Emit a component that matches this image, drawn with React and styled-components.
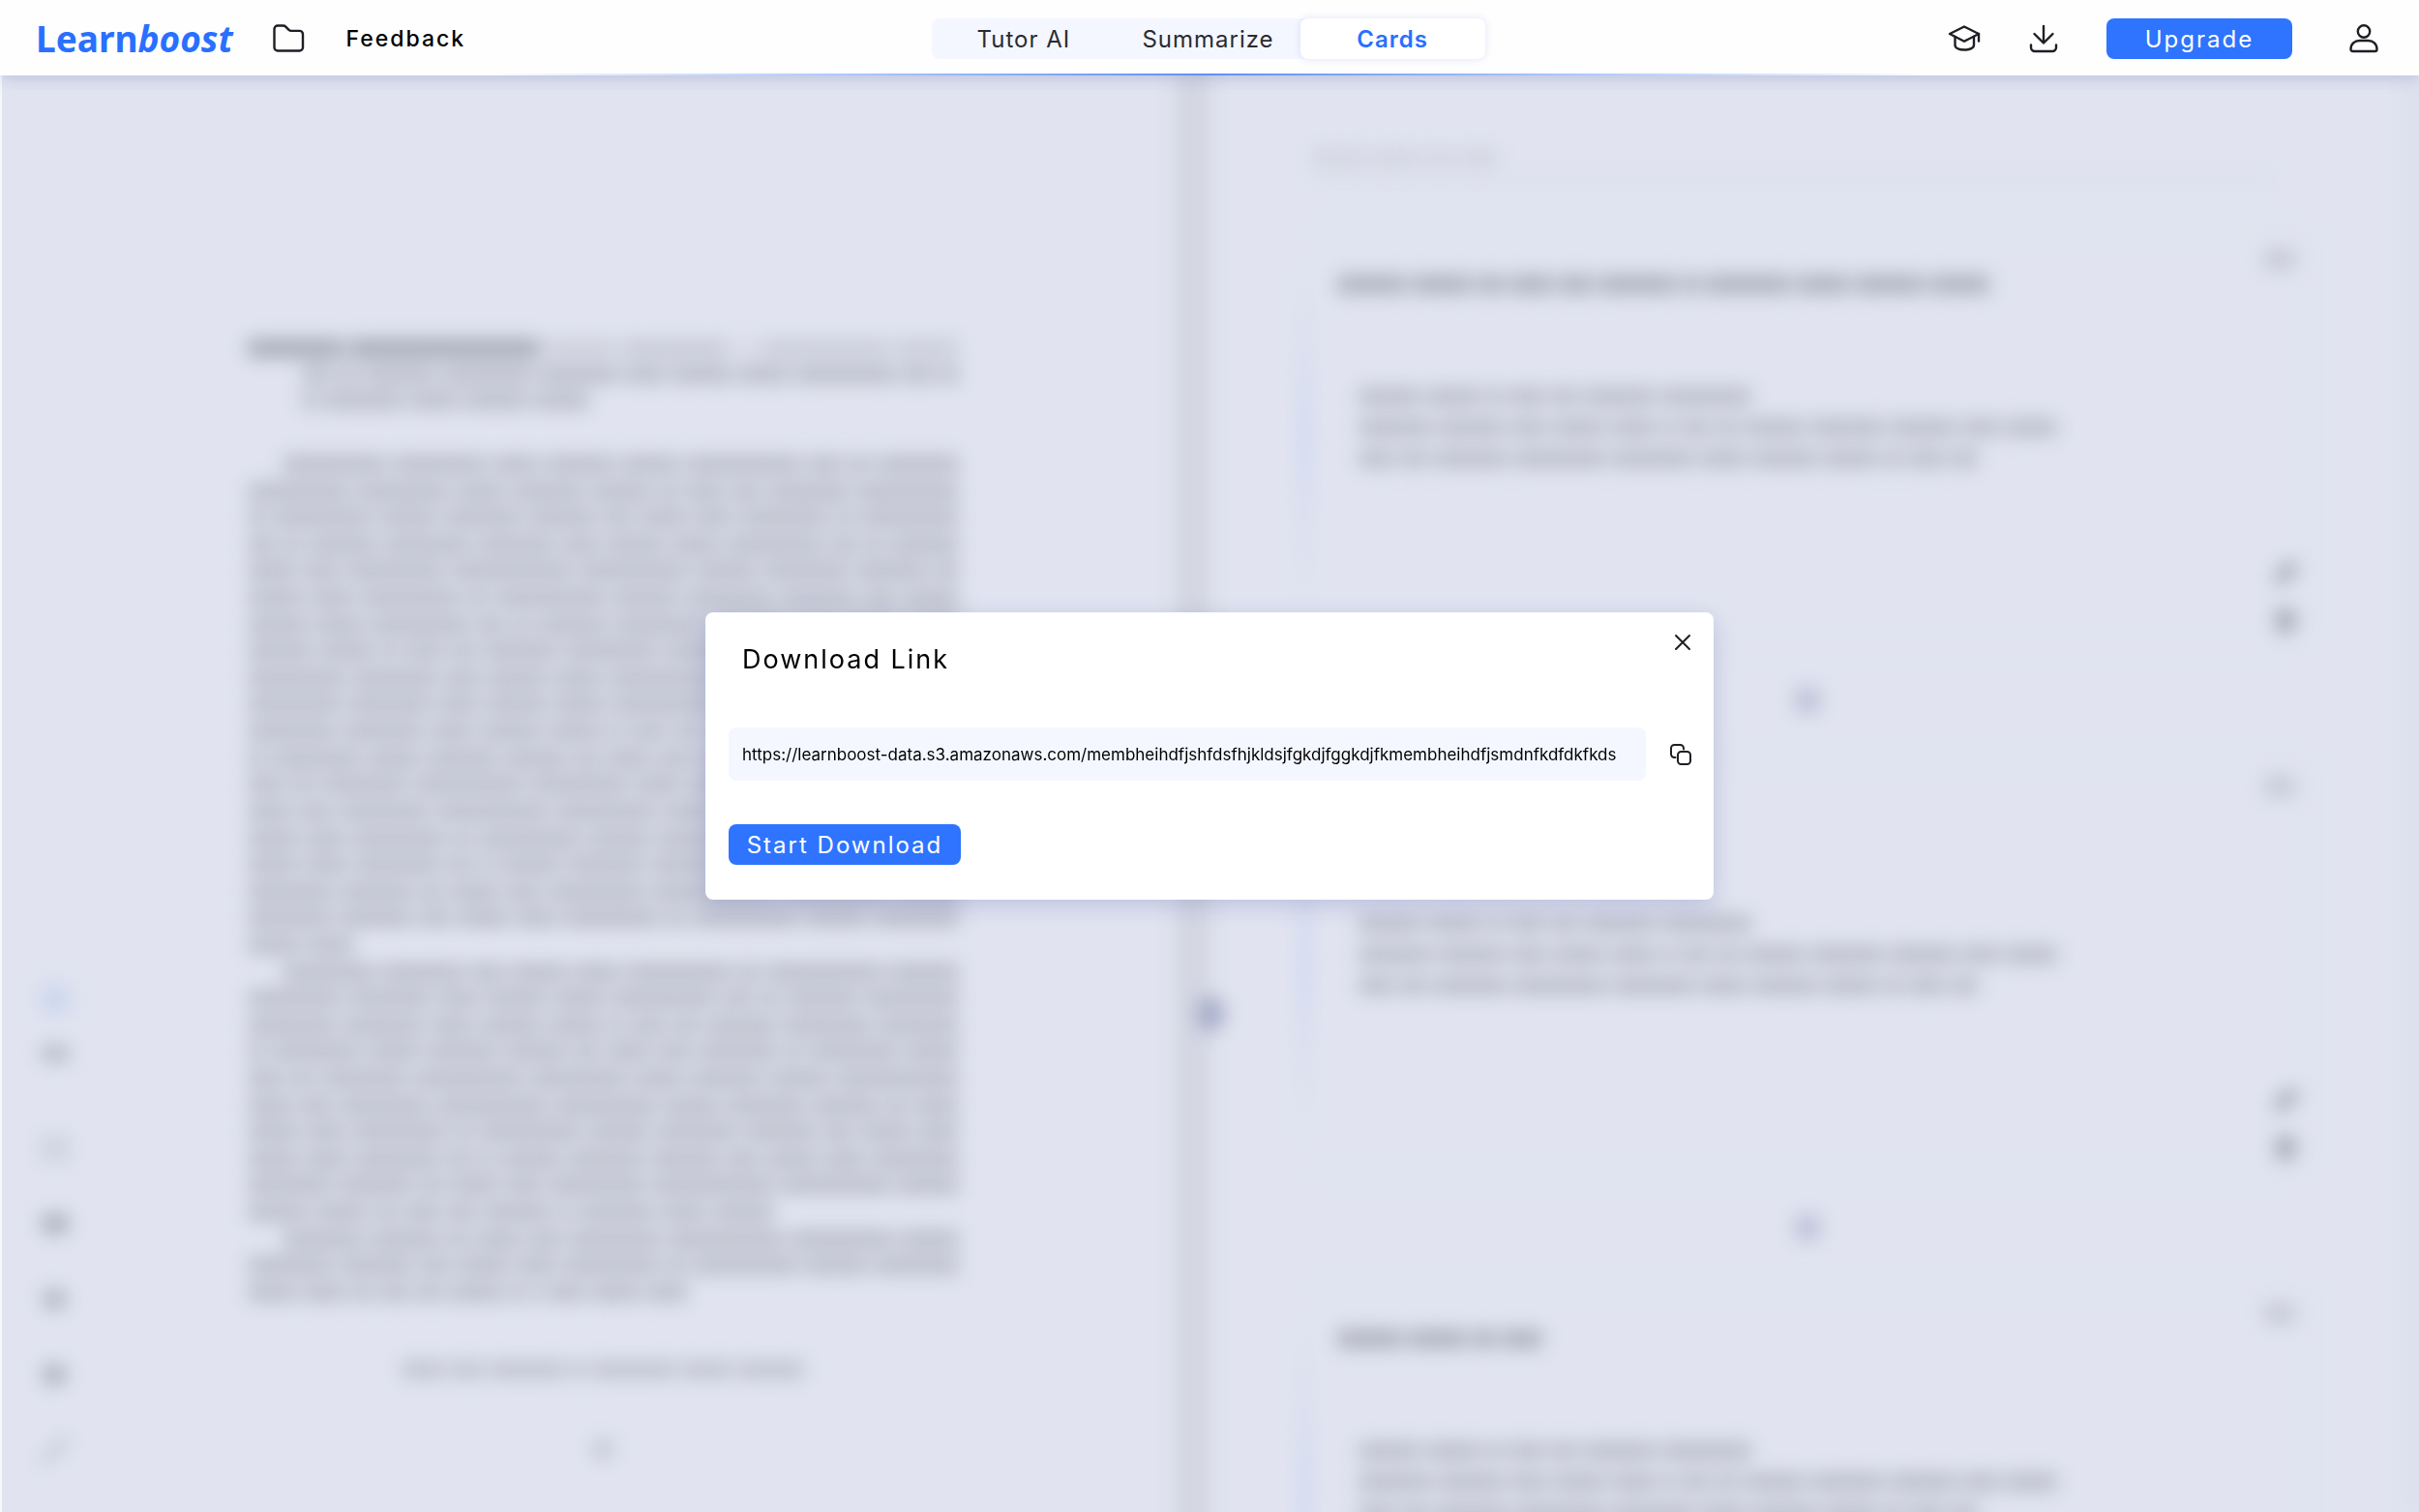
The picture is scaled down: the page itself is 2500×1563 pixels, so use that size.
import styled, { createGlobalStyle, css } from "styled-components";

const theme = {
  blue: "#2970FF",
  button: "#2E74FF",
  tint: "#F4F7FF",
  ink: "#000000",
  veil: "#E1E4F0",
  smudge: "#BABCC9",
};

const GlobalStyle = createGlobalStyle`
  * {
    box-sizing: border-box;
  }

  body {
    margin: 0;
    font-family: Inter, "Liberation Sans", sans-serif;
    color: ${theme.ink};
  }

  button, input {
    font-family: inherit;
  }
`

const Page = styled.div`
  display: flex;
  flex-direction: column;
  height: 100vh;
  min-height: 900px;
  overflow: hidden;
`

/* Header */

const Header = styled.header`
  position: relative;
  z-index: 1;
  display: grid;
  grid-template-columns: 1fr 572px 1fr;
  align-items: center;
  flex-shrink: 0;
  height: 78px;
  padding: 2px 40px 0 37px;
  background: #FEFEFF;
  box-shadow: 0 2px 16px rgba(80, 90, 170, 0.28);

  &::after {
    content: "";
    position: absolute;
    left: 20%;
    right: 20%;
    bottom: 0;
    height: 2px;
    background: linear-gradient(90deg, transparent, #5E90F5, transparent);
  }
`

const HeaderSide = styled.div`
  display: flex;
  align-items: center;
  justify-content: ${props => props.$end ? "flex-end" : "flex-start"};
`

const Logo = styled.a`
  margin-right: 40px;
  color: ${theme.blue};
  font-family: "Noto Sans", "Open Sans", sans-serif;
  font-size: 37px;
  line-height: 42px;
  font-weight: 700;
  text-decoration: none;

  em {
    font-style: italic;
  }
`

const IconButton = styled.button`
  display: flex;
  padding: 0;
  border: none;
  background: none;
  color: #1E1E24;
  cursor: pointer;
`

const NavLink = styled.a`
  margin-left: 43px;
  color: ${theme.ink};
  font-size: 23px;
  font-weight: 500;
  letter-spacing: 2px;
  text-decoration: none;
`

const Tabs = styled.nav`
  display: grid;
  grid-template-columns: repeat(3, 1fr);
  height: 42px;
  border-radius: 8px;
  background: ${theme.tint};
`

const Tab = styled.button`
  border: none;
  border-radius: 8px;
  background: none;
  color: #2B2B30;
  font-size: 24px;
  letter-spacing: 1px;
  cursor: pointer;

  ${props => props.$active && css`
    background: #FFFFFF;
    color: ${theme.blue};
    font-weight: 600;
    box-shadow: 0 0 8px rgba(60, 80, 180, 0.14);
  `}
`

const Actions = styled.div`
  display: flex;
  align-items: center;
  gap: 49px;
  margin-right: 57px;
`

const PrimaryButton = styled.button`
  width: ${props => props.$wide ? "240px" : "192px"};
  height: 42px;
  border: none;
  border-radius: 8px;
  background: ${theme.button};
  color: #FFFFFF;
  font-size: 24px;
  letter-spacing: 2px;
  cursor: pointer;
`

/* Workspace behind the dialog */

const Workspace = styled.main`
  flex: 1;
  min-height: 0;
  overflow: hidden;
  border-left: 2px solid #F6F7FC;
  background: ${theme.veil};
`

const Panes = styled.div`
  display: grid;
  grid-template-columns: 49fr 36px 50fr 12px;
  grid-template-rows: 100%;
  height: 100%;
  filter: blur(10px);
`

const Reader = styled.section`
  display: flex;
`

const Tools = styled.div`
  display: flex;
  flex-direction: column;
  justify-content: flex-end;
  align-items: center;
  gap: 46px;
  width: 110px;
  padding-bottom: 48px;
  color: #9FA2B0;
`

const ToolGroup = styled.div`
  display: flex;
  flex-direction: column;
  gap: 24px;
  margin-bottom: 20px;
`

const BlueDot = styled.div`
  width: 32px;
  height: 32px;
  border-radius: 16px;
  background: #CAD6EE;
`

const Sheet = styled.article`
  display: flex;
  flex: 1;
  flex-direction: column;
  padding: 273px 224px 56px 144px;
`

const SheetHeading = styled.div`
  display: flex;
  flex-direction: column;
  gap: 9px;
  margin-bottom: 48px;
`

const SheetBody = styled.div`
  display: flex;
  flex: 1;
  flex-direction: column;
  justify-content: space-between;
  margin-bottom: 62px;
`

const SheetFooter = styled.div`
  display: flex;
  flex-direction: column;
  align-items: center;
  gap: 64px;
`

const LineRow = styled.div`
  display: flex;
  gap: 6px;
  width: ${props => props.$width || "100%"};
  padding-left: ${props => props.$indent || "0"};
`

const Word = styled.span`
  flex: ${props => props.$size} 1 0;
  height: 18px;
  background: ${props => props.$tone || theme.smudge};
`

const Divider = styled.div`
  display: flex;
  flex-direction: column;
  align-items: flex-end;
  padding-top: 952px;
  background: #D3D5E1;
  box-shadow: 0 30px 0 #D3D5E1, 0 -30px 0 #D3D5E1;
`

const Handle = styled.div`
  width: 28px;
  height: 36px;
  margin-right: -14px;
  border-radius: 14px;
  background: #A4ABC6;
`

const Scrollbar = styled.div`
  background: #DADDEA;
`

const Deck = styled.section`
  display: flex;
  flex-direction: column;
  padding: 76px 97px 0 95px;
`

const Search = styled.div`
  display: flex;
  flex-shrink: 0;
  height: 32px;
  margin: 0 36px 50px 10px;
  border-bottom: 2px solid #CDD0DC;
`

const Card = styled.article`
  display: grid;
  grid-template-columns: 4px 1fr 48px;
  column-gap: 32px;
  flex-shrink: 0;
  height: 430px;
  padding-right: 4px;
  border: 1px solid #DADDEA;
  border-left: none;
  border-radius: 12px;
`

const Accent = styled.div`
  background: linear-gradient(transparent 8%, #A9C4F6 50%, transparent 92%);
`

const CardText = styled.div`
  display: flex;
  flex-direction: column;
  padding-top: 48px;
`

const Answer = styled.div`
  display: flex;
  flex-direction: column;
  gap: 14px;
  margin-top: 98px;
  padding-left: 22px;
`

const CardTools = styled.div`
  display: flex;
  flex-direction: column;
  align-items: center;
  gap: 20px;
  padding: 20px 0 8px;
  color: #9C9FAD;
`

const More = styled.div`
  align-self: flex-start;
  width: 36px;
  height: 22px;
  margin-bottom: auto;
  border-radius: 11px;
  background: #C6C8D5;
`

const AddCard = styled.div`
  display: flex;
  flex-shrink: 0;
  justify-content: center;
  align-items: center;
  height: 115px;

  &::before {
    content: "";
    width: 28px;
    height: 28px;
    border-radius: 14px;
    background: #B9BFD6;
  }
`

/* Dialog */

const Overlay = styled.div`
  position: fixed;
  inset: 0;
  z-index: 2;
  display: flex;
  justify-content: center;
  align-items: center;
`

const Dialog = styled.section`
  width: 1042px;
  max-width: 100%;
  padding: 21px 22px 36px 24px;
  border-radius: 8px;
  background: #FFFFFF;
  box-shadow: 0 6px 24px rgba(60, 75, 160, 0.22);
`

const DialogTop = styled.div`
  display: flex;
  justify-content: space-between;
  align-items: flex-start;
`

const DialogTitle = styled.h2`
  margin: 11px 0 0 14px;
  font-size: 27px;
  line-height: 34px;
  font-weight: 400;
  letter-spacing: 2px;
`

const LinkRow = styled.div`
  display: flex;
  justify-content: space-between;
  align-items: center;
  gap: 24px;
  margin: 53px 0 45px;
`

const LinkField = styled.input`
  flex: 1;
  min-width: 0;
  height: 55px;
  padding: 0 14px;
  border: none;
  border-radius: 8px;
  background: ${theme.tint};
  color: ${theme.ink};
  font-size: 17px;
`

function Icon({ size, box = 24, stroke = 2, children }) {
  return (
    <svg width={size} height={size} viewBox={`0 0 ${box} ${box}`} fill="none" stroke="currentColor"
      strokeWidth={stroke} strokeLinecap="round" strokeLinejoin="round" aria-hidden="true">
      {children}
    </svg>
  )
}

const wordSizes = (seed, count) =>
  Array.from({ length: count }, (_, i) => 2 + ((seed * 7 + i * i * 3 + i * 5) % 9));

function Line({ seed, count = 11, width, indent, tone }) {
  return (
    <LineRow $width={width} $indent={indent}>
      {wordSizes(seed, count).map((size, i) => <Word key={i} $size={size} $tone={tone} />)}
    </LineRow>
  )
}

// number of lines in each paragraph and how far its last line reaches
const paragraphs = [
  { lines: 19, last: "15%" },
  { lines: 10, last: "74%" },
  { lines: 3, last: "62%" },
];

const cards = [
  { title: "73%", words: 11 },
  { title: "32%", words: 5 },
  { title: "23%", words: 4 },
];

function Document() {
  return (
    <Sheet>
      <SheetHeading>
        <LineRow>
          <Word $size={12} $tone="#A3A5B3" />
          <Word $size={24} $tone="#A3A5B3" />
          <Word $size={9} $tone="#CCCEDA" />
          <Word $size={13} $tone="#C6C8D5" />
          <Word $size={3} $tone="#D6D8E4" />
          <Word $size={16} $tone="#C9CBD8" />
          <Word $size={8} $tone="#C9CBD8" />
        </LineRow>
        <Line seed={4} indent="56px" />
        <Line seed={9} count={5} width="48%" indent="56px" />
      </SheetHeading>

      <SheetBody>
        {paragraphs.map((paragraph, p) => (
          Array.from({ length: paragraph.lines }, (_, i) => (
            <Line
              key={`${p}-${i}`}
              seed={p * 5 + i * 4 + 1}
              count={i === paragraph.lines - 1 && p === 0 ? 2 : 9 + (i % 4)}
              width={i === paragraph.lines - 1 ? paragraph.last : "100%"}
              indent={i === 0 ? "36px" : "0"}
            />
          ))
        ))}
      </SheetBody>

      <SheetFooter>
        <Line seed={3} count={7} width="416px" tone="#C0C2CF" />
        <Line seed={1} count={1} width="20px" tone="#C0C2CF" />
      </SheetFooter>
    </Sheet>
  )
}

function FlashCard({ title, words }) {
  return (
    <Card>
      <Accent />
      <CardText>
        <Line seed={6} count={words} width={title} tone="#ABADBB" />
        <Answer>
          <Line seed={2} count={7} width="45%" />
          <Line seed={5} count={13} width="80%" />
          <Line seed={8} count={11} width="71%" />
        </Answer>
      </CardText>
      <CardTools>
        <More />
        <Icon size={30} stroke={5}><path d="M5 19l2-6L17 5l3 3L10 18zM11 9l4 4" /></Icon>
        <Icon size={30} stroke={5}><path d="M5 7h14M7 7l1 12h8l1-12M10 4h4M12 9v8" /></Icon>
      </CardTools>
    </Card>
  )
}

function App() {
  return (
    <Page>
      <GlobalStyle />

      <Header>
        <HeaderSide>
          <Logo href="#">Learn<em>boost</em></Logo>
          <IconButton aria-label="Files">
            <Icon size={34} box={34} stroke={2.4}>
              <path d="M6 3.500h5.500c1.200 0 2 .3 2.800 1.100l3.200 3.200c.8.8 1.300 1.100 2.500 1.100h8.500a3.500 3.500 0 0 1 3.500 3.500v13.600a3.500 3.500 0 0 1-3.500 3.500H6a3.500 3.500 0 0 1-3.500-3.500V7A3.500 3.500 0 0 1 6 3.500z" />
            </Icon>
          </IconButton>
          <NavLink href="#">Feedback</NavLink>
        </HeaderSide>

        <Tabs>
          <Tab>Tutor AI</Tab>
          <Tab>Summarize</Tab>
          <Tab $active>Cards</Tab>
        </Tabs>

        <HeaderSide $end>
          <Actions>
            <IconButton aria-label="Courses">
              <Icon size={34} box={34} stroke={2.4}>
                <path d="M17 4.500L2 12l15 7.800L32 12z" />
                <path d="M7.500 15v8.500c0 3 4 5 9.700 5s9.800-2 9.800-5V15" />
                <path d="M32 12v7.500" />
              </Icon>
            </IconButton>
            <IconButton aria-label="Download">
              <Icon size={32} box={32} stroke={2.4}>
                <path d="M16 3v17M6.500 11l9.500 9.500 9.500-9.500" />
                <path d="M3 22.500v2.500a4 4 0 0 0 4 4h18a4 4 0 0 0 4-4v-2.500" />
              </Icon>
            </IconButton>
            <PrimaryButton>Upgrade</PrimaryButton>
          </Actions>
          <IconButton aria-label="Account">
            <Icon size={34} box={34} stroke={2.4}>
              <circle cx="17" cy="9.500" r="6.200" />
              <path d="M3.500 28c0-5.800 4-9 9-9h9c5 0 9 3.200 9 9 0 1.300-.7 2-2 2h-23c-1.300 0-2-.7-2-2z" />
            </Icon>
          </IconButton>
        </HeaderSide>
      </Header>

      <Workspace>
        <Panes aria-hidden="true">
          <Reader>
            <Tools>
              <ToolGroup>
                <BlueDot />
                <Icon size={32} stroke={4}><path d="M4 9h16v6H4z" /></Icon>
              </ToolGroup>
              <Icon size={32}><path d="M4 5h16v14H4z" /></Icon>
              <Icon size={32} stroke={6}><path d="M5 8h14v8H5z" /></Icon>
              <Icon size={32} stroke={5}><path d="M6 8h11v8H6z" /></Icon>
              <Icon size={32} stroke={4}><path d="M5 7h12v10H5zM9 12h10" /></Icon>
              <Icon size={32} stroke={3}><path d="M3 21L21 3" /></Icon>
            </Tools>
            <Document />
          </Reader>

          <Divider>
            <Handle />
          </Divider>

          <Deck>
            <Search>
              <Line seed={5} count={4} width="192px" tone="#D2D4E0" />
            </Search>
            {cards.map(card => [
              <FlashCard key={card.title} title={card.title} words={card.words} />,
              <AddCard key={`${card.title}-add`} />,
            ])}
          </Deck>

          <Scrollbar />
        </Panes>
      </Workspace>

      <Overlay>
        <Dialog role="dialog" aria-modal="true" aria-labelledby="download-title">
          <DialogTop>
            <DialogTitle id="download-title">Download Link</DialogTitle>
            <IconButton aria-label="Close">
              <Icon size={20} box={20}><path d="M3 3l14 14M17 3L3 17" /></Icon>
            </IconButton>
          </DialogTop>

          <LinkRow>
            <LinkField
              aria-label="Download link"
              readOnly
              value="https://learnboost-data.s3.amazonaws.com/membheihdfjshfdsfhjkldsjfgkdjfggkdjfkmembheihdfjsmdnfkdfdkfkds"
            />
            <IconButton aria-label="Copy link">
              <Icon size={24} box={24}>
                <path d="M6.500 15H5.500A3.500 3.500 0 0 1 2 11.500v-6A3.500 3.500 0 0 1 5.500 2h6A3.500 3.500 0 0 1 15 5.500v1" />
                <rect x="9" y="9" width="13" height="13" rx="3.500" />
              </Icon>
            </IconButton>
          </LinkRow>

          <PrimaryButton $wide>Start Download</PrimaryButton>
        </Dialog>
      </Overlay>
    </Page>
  )
};

export default App;
